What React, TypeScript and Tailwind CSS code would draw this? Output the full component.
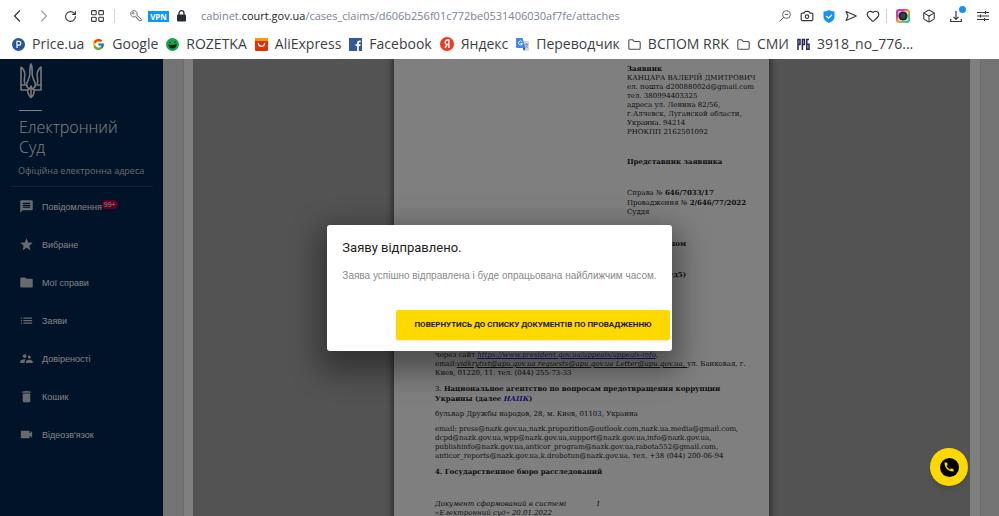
import type { ReactNode } from "react";
import { Box, Camera, ChevronLeft, ChevronRight, Heart, RotateCw } from "lucide-react";
import { MdCall, MdDelete, MdFolder, MdList, MdMessage, MdStar, MdSupervisorAccount, MdVideocam } from "react-icons/md";
import { FcGoogle } from "react-icons/fc";

const menuItems = [
    { label: "Повідомлення", icon: MdMessage, badge: "99+" },
    { label: "Вибране", icon: MdStar },
    { label: "Мої справи", icon: MdFolder },
    { label: "Заяви", icon: MdList },
    { label: "Довіреності", icon: MdSupervisorAccount },
    { label: "Кошик", icon: MdDelete },
    { label: "Відеозв'язок", icon: MdVideocam },
];

const FolderIcon = () => (
    <svg className="w-[13px] h-[13px]" viewBox="0 0 13 13" fill="none" stroke="#4a4d52" strokeWidth="1.1" strokeLinejoin="round"><path d="M.8 2.8q0-1 1-1h3l1.4 1.7h5q1 0 1 1v5.7q0 1-1 1H1.800q-1 0-1-1z" /></svg>
);

const bookmarks = [
    { label: "Price.ua", icon: <svg className="w-[13px] h-[13px]" viewBox="0 0 13 13"><circle cx="6.500" cy="6.500" r="6.500" fill="#28569c" /><path d="M5 10V3.400h2a1.900 1.900 0 010 3.800H5" fill="none" stroke="#fff" strokeWidth="1.200" /></svg> },
    { label: "Google", icon: <FcGoogle className="w-[13px] h-[13px]" /> },
    { label: "ROZETKA", icon: <svg className="w-[13px] h-[13px]" viewBox="0 0 13 13"><circle cx="6.500" cy="6.500" r="6.500" fill="#12a54b" /><path d="M2.300 6.500q4.200 1.200 8.400-.8-.3 4.800-4.400 4.800-3.300 0-4-4z" fill="#0c2616" /><path d="M3 4.300l2 .5M8 4.500l2-.8" stroke="#0c2616" strokeWidth=".9" /></svg> },
    { label: "AliExpress", icon: <svg className="w-[13px] h-[13px]" viewBox="0 0 13 13"><rect width="13" height="13" rx="1" fill="#e62e04" /><path d="M0 3V1q0-1 1-1h11q1 0 1 1v2z" fill="#ff9a00" /><path d="M3.300 5.300q.4 3 3.200 3t3.200-3" fill="none" stroke="#fff" strokeWidth="1.200" strokeLinecap="round" /></svg> },
    { label: "Facebook", icon: <svg className="w-[13px] h-[13px]" viewBox="0 0 13 13"><rect width="13" height="13" fill="#3557a0" /><path d="M8 13V8h-1.500V6.200H8V5q0-2.500 2.400-2.500h1.300v1.700h-1q-.9 0-.9.900v1.100h1.800L11.300 8H9.800v5z" fill="#fff" /></svg> },
    { label: "Яндекс", icon: <svg className="w-[14px] h-[14px]" viewBox="0 0 14 14"><circle cx="7" cy="7" r="7" fill="#ee3a20" /><path d="M8.900 11V3H7.400a2.200 2.200 0 000 4.400h1.500M7.300 7.400L5 11" fill="none" stroke="#fff" strokeWidth="1.400" /></svg> },
    { label: "Переводчик", icon: <svg className="w-[13px] h-[13px]" viewBox="0 0 13 13"><path d="M5 3h7q1 0 1 1v8q0 1-1 1H8z" fill="#d5d9de" /><path d="M1 0h5.500l3 10H1q-1 0-1-1V1q0-1 1-1z" fill="#4285f4" /><path d="M6.200 3.800A2 2 0 106.500 5.500H4.600" fill="none" stroke="#fff" strokeWidth=".9" /><path d="M6.800 10h2.700L8 13z" fill="#2452a8" /><path d="M8.700 6.200h3.600M10.500 5.300v1M11.700 6.300q-.8 2.400-2.400 3.300M9.400 7.300q1 1.700 2.500 2.500" fill="none" stroke="#6b7785" strokeWidth=".7" /></svg> },
    { label: "ВСПОМ RRK", icon: <FolderIcon /> },
    { label: "СМИ", icon: <FolderIcon /> },
    { label: "3918_no_776...", icon: <svg className="w-[13px] h-[13px]" viewBox="0 0 13 13" fill="none" stroke="#27245c" strokeWidth="1.500"><path d="M1 12V1.500h2v5H1M5.400 12V1.500h2v5h-2M12 1.500H9.800v9.800h2.200v-5H9.800" /></svg> },
];

function IconButton({ label, className, children }: { label: string; className: string; children: ReactNode }) {
    return (
        <button type="button" aria-label={label} className={`flex h-6 shrink-0 items-center justify-center text-[#33383f] ${className}`}>
            {children}
        </button>
    );
}

function BrowserBar() {
    return (
        <header className="shrink-0 bg-white font-['Open_Sans','Noto_Sans',sans-serif]">
            <div className="flex h-8 items-center px-[3px]">
                <IconButton label="Назад" className="w-[27px]"><ChevronLeft className="w-5 h-5" strokeWidth={1.5} /></IconButton>
                <IconButton label="Вперед" className="w-[27px]"><ChevronRight className="w-5 h-5 text-gray-400" strokeWidth={1.3} /></IconButton>
                <IconButton label="Оновити" className="w-[27px]"><RotateCw className="w-[13px] h-[13px]" strokeWidth={2} /></IconButton>
                <IconButton label="Експрес-панель" className="w-[27px]">
                    <svg className="w-[13px] h-3" viewBox="0 0 13 12" fill="none" stroke="currentColor" strokeWidth="1.100"><rect x=".6" y=".6" width="4.600" height="4.200" rx=".8" /><rect x="7.800" y=".6" width="4.600" height="4.200" rx=".8" /><rect x=".6" y="7.200" width="4.600" height="4.200" rx=".8" /><rect x="7.800" y="7.200" width="4.600" height="4.200" rx=".8" /></svg>
                </IconButton>
                <span className="ml-[3px] h-[14px] w-px bg-gray-300" />
                <IconButton label="Паролі" className="ml-2 w-[25px]">
                    <svg className="w-3 h-3" viewBox="0 0 12 12" fill="none" stroke="#666b72" strokeWidth="1" strokeLinejoin="round"><path d="M6.800 5.200a3.200 3.200 0 10-1.500 1.500l1 .2.200 1.200 1.200.2.200 1.200 1 .2.300 1h2.100V9.200z" /><circle cx="3.200" cy="3.200" r=".8" /></svg>
                </IconButton>
                <span className="h-[11px] w-[21px] bg-[#0f96fb] text-center text-[8px] leading-[11px] font-bold text-white">VPN</span>
                <IconButton label="Захищене з'єднання" className="w-6">
                    <svg className="w-[9px] h-3" viewBox="0 0 9 12"><rect y="4.500" width="9" height="7" rx="1" fill="#272c34" /><path d="M2 5V3.200a2.500 2.500 0 015 0V5" fill="none" stroke="#272c34" strokeWidth="1.300" /></svg>
                </IconButton>
                <div className="ml-2 min-w-0 grow truncate text-[11px] text-[#7a8491]">
                    cabinet.<span className="text-[#22262c]">court.gov.ua</span>/cases_claims/d606b256f01c772be0531406030af7fe/attaches
                </div>
                <IconButton label="Масштаб" className="w-[22px]">
                    <svg className="w-3 h-3" viewBox="0 0 12 12" fill="none" stroke="#555" strokeWidth=".9"><circle cx="7.500" cy="4.500" r="3.900" /><path d="M4.700 7.300L.5 11.500M5.800 4.500h3.400" /></svg>
                </IconButton>
                <IconButton label="Знімок" className="w-[22px]"><Camera className="w-[14px] h-[14px]" strokeWidth={2} /></IconButton>
                <IconButton label="Блокування реклами" className="w-[22px]">
                    <svg className="w-3 h-[13px]" viewBox="0 0 12 13"><path d="M6 0q2.500 1.500 5.500 1.500V7q0 3.500-5.500 6Q.5 10.500.5 7V1.500Q3.500 1.500 6 0z" fill="#1593f5" /><path d="M3.300 6l2.200 2.200L9 4.800" fill="none" stroke="#fff" strokeWidth="1.300" /></svg>
                </IconButton>
                <IconButton label="Надіслати" className="w-[22px]">
                    <svg className="w-3 h-3" viewBox="0 0 12 12" fill="none" stroke="currentColor" strokeWidth="1.100" strokeLinejoin="round"><path d="M1 1.500L11.300 6 1 10.500 3 6z" /></svg>
                </IconButton>
                <IconButton label="Закладка" className="w-[22px]"><Heart className="w-[14px] h-[14px]" strokeWidth={2} /></IconButton>
                <span className="mx-[2px] h-[14px] w-px bg-gray-300" />
                <IconButton label="Instagram" className="w-[27px]">
                    <svg className="w-[14px] h-[14px]" viewBox="0 0 14 14"><defs><linearGradient id="rainbow" x1="0" y1="0" x2="1" y2="1"><stop stopColor="#8a4be0" /><stop offset=".3" stopColor="#e6399b" /><stop offset=".5" stopColor="#ff9a3d" /><stop offset=".75" stopColor="#5fd06a" /><stop offset="1" stopColor="#2aa5f0" /></linearGradient></defs><rect width="14" height="14" rx="3" fill="url(#rainbow)" /><rect x="2" y="2" width="10" height="10" rx="2" fill="#fff" opacity=".65" /><circle cx="7" cy="7" r="4.600" fill="#1f2630" /><circle cx="7" cy="7" r="2.700" fill="#35414f" /></svg>
                </IconButton>
                <IconButton label="Розширення" className="w-[26px]"><Box className="w-[14px] h-[14px]" strokeWidth={1.800} /></IconButton>
                <IconButton label="Завантаження" className="relative w-[27px]">
                    <svg className="w-3 h-[13px]" viewBox="0 0 12 13" fill="none" stroke="currentColor" strokeWidth="1.200"><path d="M6 1v8M3.500 6.800L6 9.300l2.500-2.500M.7 9v2.500h10.600V9" /></svg>
                    <span className="absolute top-[2px] right-[3px] h-[7px] w-[7px] rounded-full bg-[#1593f5]" />
                </IconButton>
                <IconButton label="Налаштування" className="w-[27px]">
                    <svg className="w-3 h-3" viewBox="0 0 12 12" fill="none" stroke="currentColor" strokeWidth="1.100"><path d="M0 2.500h12M0 6h12M0 9.500h12M8.500 1v3M3.500 4.500v3M7.500 8v3" /></svg>
                </IconButton>
            </div>
            <nav className="flex h-[27px] items-start gap-2 overflow-hidden pl-3 text-[14px] leading-6 text-[#3b3f45]">
                {bookmarks.map((item) => (
                    <a key={item.label} href="#" className="flex shrink-0 items-center gap-[7px] whitespace-nowrap">
                        {item.icon}
                        <span>{item.label}</span>
                    </a>
                ))}
            </nav>
        </header>
    );
}

function Sidebar() {
    return (
        <aside className="w-[163px] shrink-0 bg-[#002652] text-white">
            <div className="px-[19px] pt-1">
                <svg className="w-6 h-9" viewBox="0 0 24 36" fill="none" stroke="#f0f0f0" strokeWidth="1.600" strokeLinejoin="round">
                    <path d="M12 1c-1.600 3-1 7-1.200 10.500-.2 4.500-2.800 6.500-3.200 10 0 2.300 1.400 3.600 3 4 .4 0 1.400-.6 1.400-2 0 1.400 1 2 1.400 2 1.600-.4 3-1.700 3-4-.4-3.500-3-5.500-3.200-10C13 8 13.600 4 12 1z" />
                    <path d="M2 4v23h6.500c.4 3.500 1.500 6 3.500 7.500 2-1.500 3.100-4 3.500-7.500H22V4c-3.300 2.500-4.500 6-3.600 10.500.5 3 .6 4.500-.2 6.500M2 4c3.300 2.500 4.500 6 3.600 10.500-.5 3-.6 4.500.2 6.500M2 22h6M22 22h-6M8.500 27q3.500-1 3.500-4 0 3 3.500 4M12 26v8" />
                </svg>
                <div className="mt-[11px] h-px w-[23px] bg-white" />
                <h1 className="mt-[6px] font-['Open_Sans','Noto_Sans',sans-serif] text-[16px] leading-5 font-light">Електронний<br />Суд</h1>
            </div>
            <p className="mx-[10px] mt-[6px] border-b border-white/15 pb-[7px] pl-2 font-['Open_Sans','Noto_Sans',sans-serif] text-[9px] leading-4 whitespace-nowrap text-gray-300">Офіційна електронна адреса</p>
            <ul className="font-['Liberation_Sans',sans-serif] text-[9px]">
                {menuItems.map(({ label, icon: Icon, badge }) => (
                    <li key={label}>
                        <a href="#" className="flex h-[38px] items-center pl-[19px]">
                            <Icon className="mr-2 h-[15px] w-[15px] text-gray-300" />
                            <span className="pt-[3px]">{label}</span>
                            {badge && <span className="mb-[3px] rounded-full bg-[#c8003c] px-[2px] text-[7px] leading-[9px]">{badge}</span>}
                        </a>
                    </li>
                ))}
            </ul>
        </aside>
    );
}

function DocumentPage() {
    return (
        <article className="w-[375px] shrink-0 self-start bg-white px-[41px] pt-[5px] pb-6 font-['DejaVu_Serif',serif] text-[7px] leading-[9px] whitespace-nowrap text-[#222] shadow-[0_0_6px_2px_rgba(0,0,0,0.5)]">
            <div className="ml-[192px]">
                <p>
                    <b>Заявник</b><br />
                    КАНЦАРА ВАЛЕРІЙ ДМИТРОВИЧ<br />
                    ел. пошта d20088002d@gmail.com<br />
                    тел. 380994403325<br />
                    адреса ул. Ленина 82/56,<br />
                    г.Алчевск, Луганской области,<br />
                    Украина. 94214<br />
                    РНОКПП 2162501092
                </p>
                <p className="mt-5 font-bold">Представник заявника</p>
                <p className="mt-[22px]">
                    Справа № <b>646/7033/17</b><br />
                    Провадження № <b>2/646/77/2022</b><br />
                    Суддя
                </p>
            </div>
            <div className="mr-[42px] text-right font-bold">
                <p className="mt-[22px]">ном</p>
                <p className="mt-[22px]">уд5)</p>
            </div>
            <div className="mt-[72px] flex flex-col gap-[6px]">
                <p>
                    через сайт <a href="#" className="text-[#2a2ae0] italic underline">https://www.president.gov.ua/appeals/appeals-info</a>,<br />
                    email:<i className="underline">vidkrytist@apu.gov.ua requests@apu.gov.ua Letter@apu.gov.ua, </i>ул. Банковая, г.<br />
                    Киев, 01220, 11. тел. (044) 255-73-33
                </p>
                <p>
                    3. <b>Национальное агентство по вопросам предотвращения коррупции<br />
                    Украины (далее <a href="#" className="text-[#2a2ae0] italic">НАПК</a>)</b>
                </p>
                <p>бульвар Дружбы народов, 28, м. Киев, 01103, Украина</p>
                <p>
                    email: press@nazk.gov.ua,nazk.propozition@outlook.com,nazk.ua.media@gmail.com,<br />
                    dcpd@nazk.gov.ua,wpp@nazk.gov.ua,support@nazk.gov.ua,info@nazk.gov.ua,<br />
                    publishinfo@nazk.gov.ua,anticor_program@nazk.gov.ua,rabota552@gmail.com,<br />
                    anticor_reports@nazk.gov.ua,k.drobotun@nazk.gov.ua. тел. +38 (044) 200-06-94
                </p>
                <p className="font-bold">4. Государственное бюро расследований</p>
            </div>
            <footer className="mt-6 flex italic">
                <p className="w-[161px]">Документ сформований в системі<br />«Електронний суд» 20.01.2022</p>
                <span>1</span>
            </footer>
        </article>
    );
}

function SentDialog() {
    return (
        <div className="absolute inset-0 flex items-center justify-center bg-black/50">
            <div role="dialog" aria-modal="true" aria-labelledby="dialog-title" className="rounded-[3px] bg-white pb-[11px] font-['Roboto',sans-serif] shadow-[0_12px_30px_8px_rgba(0,0,0,0.4)]">
                <div className="px-[15px] pt-[13px]">
                    <h2 id="dialog-title" className="text-[13px] leading-5 text-[#212121]">Заяву відправлено.</h2>
                    <p className="mt-[10px] font-['Liberation_Sans',sans-serif] text-[10px] leading-4 text-[#8a8a8a]">Заява успішно відправлена і буде опрацьована найближчим часом.</p>
                </div>
                <div className="mt-[26px] flex justify-end pr-[2px]">
                    <button type="button" className="h-[30px] rounded-[2px] bg-[#fdd900] px-[18px] text-[8px] font-bold text-[#1c1a00] uppercase shadow">Повернутись до списку документів по провадженню</button>
                </div>
            </div>
        </div>
    );
}

function App() {
    return (
        <div className="flex h-screen flex-col overflow-hidden">
            <BrowserBar />
            <div className="relative flex min-h-0 grow overflow-hidden">
                <Sidebar />
                <main className="flex min-w-0 grow bg-[#e8e8e8] pr-[18px] pl-5">
                    <div className="flex min-w-0 grow border-x border-[#d8d8d8] bg-white pr-[10px] pl-[9px]">
                        <div className="flex min-w-0 grow justify-center overflow-hidden bg-[#a7a7a7]">
                            <DocumentPage />
                        </div>
                    </div>
                </main>
                <SentDialog />
                <button type="button" aria-label="Зателефонувати" className="absolute right-[31px] bottom-[30px] flex h-[38px] w-[38px] items-center justify-center rounded-full bg-[#fdd900] shadow-md">
                    <span className="flex h-[19px] w-[19px] items-center justify-center rounded-full bg-black text-[#fdd900]"><MdCall className="h-3 w-3" /></span>
                </button>
            </div>
        </div>
    );
}

export default App;
